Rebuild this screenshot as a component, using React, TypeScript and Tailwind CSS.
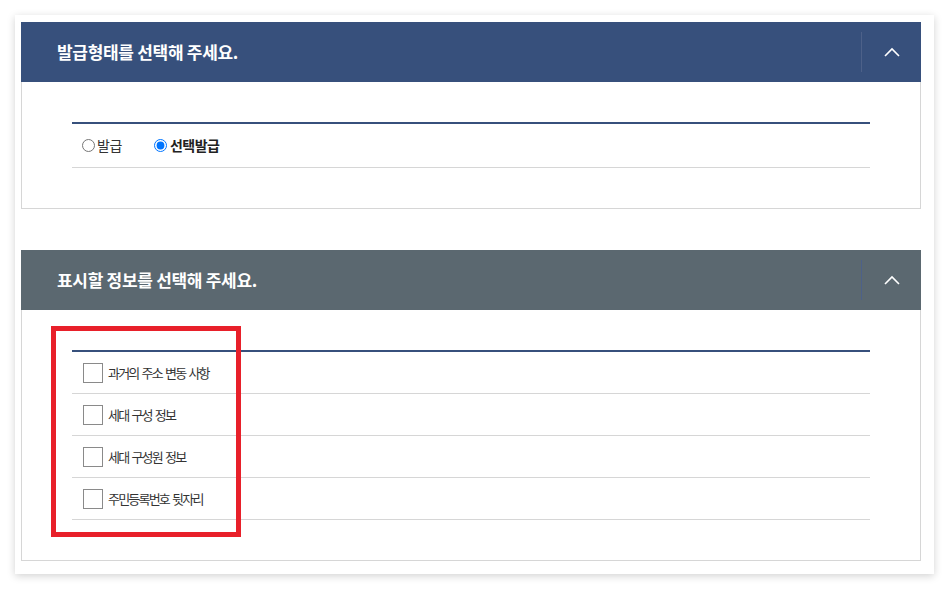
import { useState } from "react";

const font = { fontFamily: '"Noto Sans CJK KR", "Noto Sans", sans-serif' };

function Chevron() {
  return (
    <svg width="16" height="10" viewBox="0 0 16 10" fill="none">
      <polyline points="1,9 8,2 15,9" stroke="#ffffff" strokeWidth="1.6" />
    </svg>
  );
}

function SectionHeader({ title, color }: { title: string; color: string }) {
  return (
    <div className={`flex h-[60px] items-center ${color}`}>
      <h2 className="flex-1 pl-[36px] text-[17px] font-bold tracking-[-0.3px] text-white">{title}</h2>
      <button className="flex h-[40px] w-[60px] items-center justify-center border-l border-[#4d6189]">
        <Chevron />
      </button>
    </div>
  );
}

export default function App() {
  const [issueType, setIssueType] = useState("select");
  const [checked, setChecked] = useState<string[]>([]);
  const items = ["과거의 주소 변동 사항", "세대 구성 정보", "세대 구성원 정보", "주민등록번호 뒷자리"];

  const toggle = (item: string) => {
    setChecked(checked.includes(item) ? checked.filter((c) => c !== item) : [...checked, item]);
  };

  return (
    <div className="min-h-screen bg-white p-[15px] pb-0" style={font}>
      <div className="flex flex-col gap-[41px] bg-white pb-[13px] pl-[6px] pr-[13px] pt-[7px] shadow-[0_2px_8px_rgba(0,0,0,0.18)]">
        {/* 발급형태 */}
        <section>
          <SectionHeader title="발급형태를 선택해 주세요." color="bg-[#37507c]" />
          <div className="border border-t-0 border-[#d6d6d6] px-[50px] py-[40px]">
            <div className="flex h-[46px] items-center gap-[32px] border-t-2 border-b border-t-[#37507c] border-b-[#d6d6d6] pl-[10px]">
              <label className="flex cursor-pointer items-center gap-[2px] text-[14px] tracking-[-0.4px] text-[#333]">
                <input
                  type="radio"
                  name="issue"
                  className="m-0 h-[13px] w-[13px]"
                  checked={issueType === "normal"}
                  onChange={() => setIssueType("normal")}
                />
                발급
              </label>
              <label className="flex cursor-pointer items-center gap-[3px] text-[14px] font-bold tracking-[-0.5px] text-[#222]">
                <input
                  type="radio"
                  name="issue"
                  className="m-0 h-[13px] w-[13px]"
                  checked={issueType === "select"}
                  onChange={() => setIssueType("select")}
                />
                선택발급
              </label>
            </div>
          </div>
        </section>

        {/* 표시할 정보 */}
        <section>
          <SectionHeader title="표시할 정보를 선택해 주세요." color="bg-[#5b6870]" />
          <div className="relative border border-t-0 border-[#d6d6d6] px-[50px] py-[40px]">
            <ul className="border-t-2 border-[#37507c]">
              {items.map((item) => (
                <li key={item} className="flex h-[42px] items-center border-b border-[#d6d6d6] pl-[11px]">
                  <label className="flex cursor-pointer items-center gap-[5px] text-[13px] tracking-[-1.8px] text-[#333] [word-spacing:2px]">
                    <span
                      onClick={() => toggle(item)}
                      className="flex h-[20px] w-[20px] items-center justify-center border border-[#8a8a8a] bg-white text-[12px] text-[#37507c]"
                    >
                      {checked.includes(item) ? "✓" : ""}
                    </span>
                    {item}
                  </label>
                </li>
              ))}
            </ul>
            {/* 강조 표시 */}
            <div className="pointer-events-none absolute left-[29px] top-[16px] h-[211px] w-[190px] border-[5px] border-[#e8202a]" />
          </div>
        </section>
      </div>
    </div>
  );
}
